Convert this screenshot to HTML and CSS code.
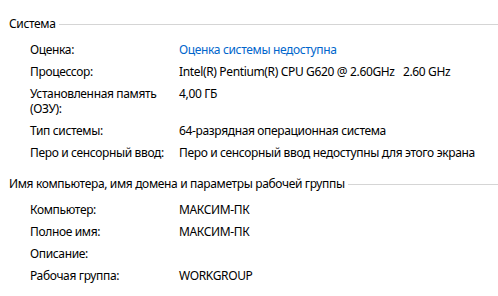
FILE: index.html
```html
<!DOCTYPE html>
<html lang="ru">

<head>
    <meta charset="UTF-8">
    <title>Система</title>
    <link rel="stylesheet" href="styles.css">
</head>

<body>
    <div class="section">
        <h2 class="section-title"><span>Система</span></h2>
        <div class="props">
            <div class="label">Оценка:</div>
            <div class="value"><a href="#" class="link">Оценка системы недоступна</a></div>
            <div class="label">Процессор:</div>
            <div class="value">Intel(R) Pentium(R) CPU G620 @ 2.60GHz&nbsp;&nbsp; 2.60 GHz</div>
            <div class="label">Установленная память (ОЗУ):</div>
            <div class="value">4,00 ГБ</div>
            <div class="label">Тип системы:</div>
            <div class="value">64-разрядная операционная система</div>
            <div class="label">Перо и сенсорный ввод:</div>
            <div class="value">Перо и сенсорный ввод недоступны для этого экрана</div>
        </div>
    </div>

    <div class="section">
        <h2 class="section-title"><span>Имя компьютера, имя домена и параметры рабочей группы</span></h2>
        <div class="props">
            <div class="label">Компьютер:</div>
            <div class="value">МАКСИМ-ПК</div>
            <div class="label">Полное имя:</div>
            <div class="value">МАКСИМ-ПК</div>
            <div class="label">Описание:</div>
            <div class="value"></div>
            <div class="label">Рабочая группа:</div>
            <div class="value">WORKGROUP</div>
        </div>
    </div>
</body>

</html>
```

FILE: styles.css
```css
body {
    font-family: "Noto Sans", sans-serif;
    font-size: 12px;
    line-height: 15px;
    letter-spacing: -0.35px;
    color: #000;
    background-color: #fff;
    margin: 0;
    padding: 16px 0 0 0;
}

.section {
    margin-bottom: 16px;
}

.section-title {
    display: flex;
    align-items: center;
    font-size: 12px;
    font-weight: normal;
    margin: 0 0 11px 0;
    padding-left: 9px;
}

.section-title::after {
    content: "";
    flex: 1;
    border-top: 1px solid #d5d5d5;
    margin-left: 3px;
    margin-top: 2px;
}

.props {
    display: grid;
    grid-template-columns: 149px 1fr;
    row-gap: 7px;
    padding-left: 30px;
}

.label {
    padding-right: 2px;
}

.link {
    color: #0066cc;
    text-decoration: none;
}
```
